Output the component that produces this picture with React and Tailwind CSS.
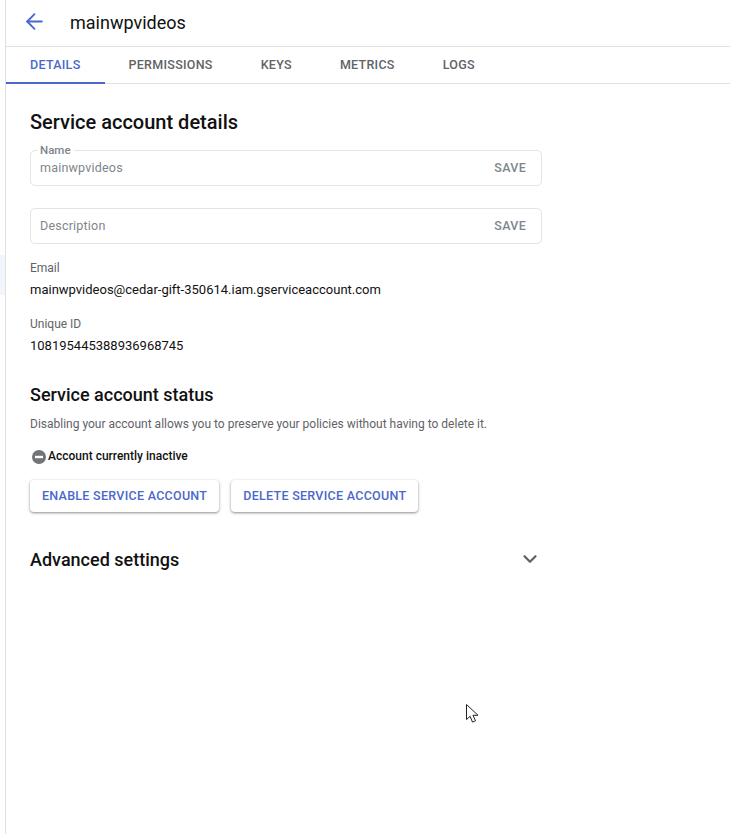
import { ArrowLeft, ChevronDown } from "lucide-react";

const tabs = ["DETAILS", "PERMISSIONS", "KEYS", "METRICS", "LOGS"];

function Field({ label, value, placeholder }) {
	return (
		<div className="relative w-[512px] h-9 rounded-[5px] border border-[#e3e4e6] flex items-center justify-between pl-[9px] pr-[15px]">
			{label && (
				<span className="absolute -top-[8px] left-[6px] bg-white px-[3px] text-[11.5px] leading-[14px] font-medium text-[#80868b]">
					{label}
				</span>
			)}
			<span className="text-[12.5px] text-[#80868b] tracking-[0.2px]">
				{value || placeholder}
			</span>
			<span className="text-[12.5px] font-medium text-[#80868b] tracking-[0.3px]">
				SAVE
			</span>
		</div>
	);
}

function ActionButton({ children }) {
	return (
		<button className="h-8 px-3 rounded-[4px] bg-white text-[12.5px] font-medium tracking-[0.28px] text-[#4a68cc] shadow-[0_1px_3px_rgba(60,64,67,0.45),0_1px_2px_rgba(60,64,67,0.2)]">
			{children}
		</button>
	);
}

export default function App() {
	return (
		<div className="min-h-[834px] w-[730px] bg-white font-['Roboto',sans-serif] flex overflow-hidden">
			{/* Side rail sliver */}
			<div className="w-[6px] shrink-0 border-r border-[#e0e0e0] pt-[255px]">
				<div className="h-[40px] w-[5px] bg-[#f0f6fb]" />
			</div>

			<div className="flex-1">
				{/* Title bar */}
				<div className="h-[47px] border-b border-[#dfe1e5] flex items-center pl-[16px]">
					<ArrowLeft size={25} strokeWidth={1.8} className="text-[#4a68cc] -mt-[3px]" />
					<h1 className="ml-[23px] text-[18px] text-[#111] -mt-[2px]">
						mainwpvideos
					</h1>
				</div>

				{/* Tabs */}
				<div className="h-[37px] border-b border-[#dfe1e5] flex">
					{tabs.map((tab, i) => (
						<div
							key={tab}
							className={`px-6 flex items-center text-[12.5px] font-medium tracking-[0.28px] ${
								i === 0
									? "pt-px text-[#4a68cc] border-b-2 border-[#4a68cc] -mb-px"
									: "text-[#5f6368]"
							}`}
						>
							{tab}
						</div>
					))}
				</div>

				<div className="pl-6 pt-[26px]">
					<h2 className="text-[20px] leading-6 font-medium text-[#111]">
						Service account details
					</h2>

					<div className="mt-[16px] space-y-[22px]">
						<Field label="Name" value="mainwpvideos" />
						<Field placeholder="Description" />
					</div>

					<p className="mt-[16px] text-[12px] leading-4 text-[#5f6368]">Email</p>
					<p className="mt-[4px] text-[13px] leading-5 text-[#111]">
						mainwpvideos@cedar-gift-350614.iam.gserviceaccount.com
					</p>

					<p className="mt-[16px] text-[12px] leading-4 text-[#5f6368]">Unique ID</p>
					<p className="mt-[4px] text-[13px] leading-5 text-[#111]">
						108195445388936968745
					</p>

					<h2 className="mt-[27px] text-[18px] leading-6 font-medium text-[#111]">
						Service account status
					</h2>
					<p className="mt-[9px] text-[12px] leading-4 text-[#5f6368]">
						Disabling your account allows you to preserve your policies without having to delete it.
					</p>

					<div className="mt-[16px] pl-[2px] flex items-center h-4">
						<svg width="14" height="14" viewBox="0 0 14 14" className="mt-[2px]">
							<circle cx="7" cy="7" r="7" fill="#70757a" />
							<rect x="3" y="5.8" width="8" height="2.4" fill="#fff" />
						</svg>
						<span className="ml-[2px] text-[12px] font-medium text-[#111]">
							Account currently inactive
						</span>
					</div>

					<div className="mt-4 flex gap-3">
						<ActionButton>ENABLE SERVICE ACCOUNT</ActionButton>
						<ActionButton>DELETE SERVICE ACCOUNT</ActionButton>
					</div>

					<div className="mt-[35px] w-[512px] h-6 flex items-center justify-between">
						<h2 className="text-[18px] font-medium text-[#111]">Advanced settings</h2>
						<ChevronDown size={22} strokeWidth={2.5} className="text-[#5f6368] mr-[1px]" />
					</div>
				</div>
			</div>

			{/* Mouse pointer captured in the screenshot */}
			<svg width="14" height="20" viewBox="0 0 14 20" className="absolute left-[466px] top-[704px]">
				<path
					d="M.5.5v15l3.6-3.2 2.4 5.8 3-1.3-2.5-5.5h5z"
					fill="#fff"
					stroke="#222"
					strokeWidth="1"
				/>
			</svg>
		</div>
	);
}
